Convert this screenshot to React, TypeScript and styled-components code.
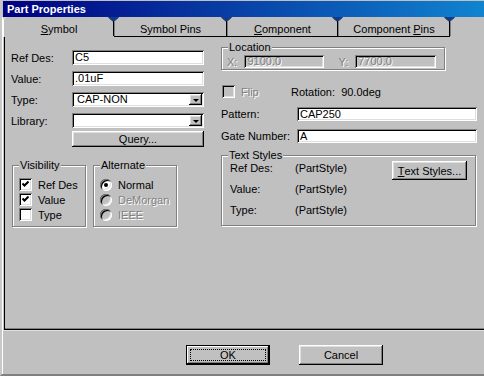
import React from "react";
import styled, { createGlobalStyle, css } from "styled-components";

const GlobalStyle = createGlobalStyle`
  html, body {
    margin: 0;
    padding: 0;
    background: #c0c0c0;
  }
  body {
    font-family: "Liberation Sans", Arial, sans-serif;
    font-size: 11px;
    color: #000;
  }
`;

const raised = css`
  box-shadow: inset -1px -1px #000, inset 1px 1px #fff,
    inset -2px -2px #808080, inset 2px 2px #dfdfdf;
`;

const sunken = css`
  box-shadow: inset 1px 1px #808080, inset -1px -1px #fff,
    inset 2px 2px #000, inset -2px -2px #dfdfdf;
`;

const tabs = [
  { label: "Symbol", u: 0, w: 111, active: true },
  { label: "Symbol Pins", u: -1, w: 113 },
  { label: "Component", u: 0, w: 111 },
  { label: "Component Pins", u: 10, w: 112 },
];

const Accel = ({ text, at }: { text: string; at: number }) =>
  at < 0 ? (
    <>{text}</>
  ) : (
    <>
      {text.slice(0, at)}
      <u>{text[at]}</u>
      {text.slice(at + 1)}
    </>
  );

const Joint = () => (
  <JointBox>
    <svg width="11" height="20" viewBox="0 0 11 20">
      <path d="M0 0 L5.5 5 L11 0 Z" fill="#0a3a9c" />
      <path d="M0.5 0.5 L5.5 4.5 L10.5 0.5" stroke="#404040" fill="none" />
      <path d="M5.5 4 V19" stroke="#000" />
      <path d="M6.5 5 V19" stroke="#808080" />
    </svg>
  </JointBox>
);

const Check = () => (
  <svg width="7" height="7" viewBox="0 0 7 7">
    <path d="M0.5 2.5 L2.5 4.5 L6.5 0.5" stroke="#000" strokeWidth="2" fill="none" />
  </svg>
);

const Combo = ({ value }: { value: string }) => (
  <ComboField>
    <FieldText>{value}</FieldText>
    <DropButton>
      <Arrow />
    </DropButton>
  </ComboField>
);

export default function App() {
  return (
    <>
      <GlobalStyle />
      <Window>
        <TitleBar>Part Properties</TitleBar>
        <Body>
          <TabStrip>
            {tabs.map((t, i) => (
              <React.Fragment key={t.label}>
                {i > 0 && <Joint />}
                <Tab $w={t.w} $active={t.active}>
                  <Accel text={t.label} at={t.u} />
                </Tab>
              </React.Fragment>
            ))}
            <Joint />
            <TabRest />
          </TabStrip>

          <Panel>
            <LeftCol>
              <FieldRow>
                <Label>Ref Des:</Label>
                <TextBox $w={132} $h={15}>C5</TextBox>
              </FieldRow>
              <FieldRow>
                <Label>Value:</Label>
                <TextBox $w={132} $h={15}>.01uF</TextBox>
              </FieldRow>
              <FieldRow>
                <Label>Type:</Label>
                <Combo value="CAP-NON" />
              </FieldRow>
              <FieldRow>
                <Label>Library:</Label>
                <Combo value="" />
              </FieldRow>
              <QueryButton>Query...</QueryButton>

              <GroupRow>
                <GroupBox $w={74} $pad="11px 0 4px 6px">
                  <Legend>Visibility</Legend>
                  <OptionRow>
                    <CheckBox><Check /></CheckBox>
                    <span>Ref Des</span>
                  </OptionRow>
                  <OptionRow>
                    <CheckBox><Check /></CheckBox>
                    <span>Value</span>
                  </OptionRow>
                  <OptionRow>
                    <CheckBox />
                    <span>Type</span>
                  </OptionRow>
                </GroupBox>
                <GroupBox $w={84} $pad="11px 0 4px 6px">
                  <Legend>Alternate</Legend>
                  <OptionRow>
                    <Radio><Dot /></Radio>
                    <span>Normal</span>
                  </OptionRow>
                  <OptionRow>
                    <Radio $disabled />
                    <Disabled>DeMorgan</Disabled>
                  </OptionRow>
                  <OptionRow>
                    <Radio $disabled />
                    <Disabled>IEEE</Disabled>
                  </OptionRow>
                </GroupBox>
              </GroupRow>
            </LeftCol>

            <RightCol>
              <GroupBox $w={224} $pad="7px 0 1px 5px">
                <Legend>Location</Legend>
                <LocRow>
                  <Disabled>X:</Disabled>
                  <TextBox $w={80} $h={13} $disabled>9100.0</TextBox>
                  <Disabled>Y:</Disabled>
                  <TextBox $w={81} $h={13} $disabled>7700.0</TextBox>
                </LocRow>
              </GroupBox>

              <FlipRow>
                <FlipCheck>
                  <CheckBox $disabled />
                  <Disabled>Flip</Disabled>
                </FlipCheck>
                <span>Rotation:&nbsp; 90.0deg</span>
              </FlipRow>

              <WideRow>
                <WideLabel>Pattern:</WideLabel>
                <TextBox $w={180} $h={14}>CAP250</TextBox>
              </WideRow>
              <WideRow>
                <WideLabel>Gate Number:</WideLabel>
                <TextBox $w={180} $h={14}>A</TextBox>
              </WideRow>

              <StylesBox $w={255} $pad="1px 0 5px 8px">
                <Legend>Text Styles</Legend>
                <StyleGrid>
                  <span>Ref Des:</span>
                  <span>(PartStyle)</span>
                  <StylesButton>
                    <Accel text="Text Styles..." at={0} />
                  </StylesButton>
                  <span>Value:</span>
                  <span>(PartStyle)</span>
                  <span />
                  <span>Type:</span>
                  <span>(PartStyle)</span>
                  <span />
                </StyleGrid>
              </StylesBox>
            </RightCol>
          </Panel>

          <Footer>
            <DefaultButton>
              <FocusRing>OK</FocusRing>
            </DefaultButton>
            <PushButton>Cancel</PushButton>
          </Footer>
        </Body>
      </Window>
    </>
  );
}

const Window = styled.div`
  width: 484px;
  height: 376px;
  overflow: hidden;
  background: #c0c0c0;
  box-sizing: border-box;
  border-left: 2px solid #c8c8c8;
  border-bottom: 2px solid #808080;
  display: flex;
  flex-direction: column;
`;

const TitleBar = styled.div`
  margin: 1px 0 0 1px;
  height: 16px;
  flex: none;
  box-sizing: border-box;
  padding: 1px 0 0 4px;
  background: linear-gradient(to right, #000080, #1084d0);
  color: #fff;
  font-weight: 700;
  font-size: 11px;
  line-height: 14px;
  white-space: nowrap;
`;

const Body = styled.div`
  flex: 1;
  display: flex;
  flex-direction: column;
  border-left: 1px solid #fff;
`;

const TabStrip = styled.div`
  height: 20px;
  flex: none;
  display: flex;
`;

const Tab = styled.div<{ $w: number; $active?: boolean }>`
  width: ${(p) => p.$w}px;
  flex: none;
  box-sizing: border-box;
  padding-top: 6px;
  text-align: center;
  white-space: nowrap;
  line-height: 13px;
  border-bottom: ${(p) => (p.$active ? "none" : "1px solid #000")};
  border-left: ${(p) => (p.$active ? "1px solid #fff" : "none")};
  border-top-left-radius: ${(p) => (p.$active ? "4px" : "0")};
`;

const JointBox = styled.div`
  width: 0;
  flex: none;
  position: relative;

  svg {
    position: absolute;
    left: -6px;
    top: 0;
    display: block;
  }
`;

const TabRest = styled.div`
  flex: 1;
`;

const Panel = styled.div`
  height: 293px;
  flex: none;
  box-sizing: border-box;
  margin-left: 1px;
  border-left: 1px solid #000;
  border-bottom: 1px solid #000;
  box-shadow: inset 0 -1px #808080;
  padding-left: 6px;
  display: flex;
  gap: 17px;
`;

const LeftCol = styled.div`
  width: 193px;
  flex: none;
  padding-top: 13px;
  display: flex;
  flex-direction: column;
`;

const RightCol = styled.div`
  width: 256px;
  flex: none;
  padding-top: 10px;
  display: flex;
  flex-direction: column;
  align-items: flex-start;
`;

const FieldRow = styled.div`
  display: flex;
  align-items: center;
  margin-bottom: 6px;
  height: 15px;
`;

const Label = styled.span`
  width: 61px;
  flex: none;
`;

const FieldText = styled.span`
  flex: 1;
  padding-left: 3px;
  white-space: nowrap;
  overflow: hidden;
`;

const TextBox = styled.div<{ $w: number; $h: number; $disabled?: boolean }>`
  width: ${(p) => p.$w}px;
  height: ${(p) => p.$h}px;
  flex: none;
  box-sizing: border-box;
  background: ${(p) => (p.$disabled ? "#c0c0c0" : "#fff")};
  color: ${(p) => (p.$disabled ? "#808080" : "#000")};
  text-shadow: ${(p) => (p.$disabled ? "1px 1px #fff" : "none")};
  ${sunken}
  padding-left: 3px;
  display: flex;
  align-items: center;
  line-height: 11px;
  white-space: nowrap;
`;

const ComboField = styled.div`
  width: 132px;
  height: 15px;
  box-sizing: border-box;
  background: #fff;
  ${sunken}
  padding: 2px;
  display: flex;
  align-items: center;
  line-height: 11px;
`;

const DropButton = styled.div`
  width: 13px;
  height: 100%;
  flex: none;
  box-sizing: border-box;
  background: #c0c0c0;
  ${raised}
  display: flex;
  align-items: center;
  justify-content: center;
`;

const Arrow = styled.span`
  width: 0;
  height: 0;
  border-left: 3px solid transparent;
  border-right: 3px solid transparent;
  border-top: 3px solid #000;
  margin-top: 1px;
`;

const buttonBase = css`
  box-sizing: border-box;
  background: #c0c0c0;
  font-family: inherit;
  font-size: 11px;
  color: #000;
  display: flex;
  align-items: center;
  justify-content: center;
  white-space: nowrap;
`;

const QueryButton = styled.div`
  ${buttonBase}
  ${raised}
  width: 132px;
  height: 16px;
  margin: -3px 0 0 61px;
`;

const GroupRow = styled.div`
  display: flex;
  gap: 7px;
  margin: 18px 0 0 1px;
`;

const GroupBox = styled.div<{ $w: number; $pad: string }>`
  position: relative;
  width: ${(p) => p.$w}px;
  box-sizing: border-box;
  border: 1px solid #808080;
  box-shadow: inset 1px 1px #fff, 1px 1px #fff;
  padding: ${(p) => p.$pad};
`;

const StylesBox = styled(GroupBox)`
  margin-top: 12px;
`;

const Legend = styled.span`
  position: absolute;
  top: -7px;
  left: 6px;
  padding: 0 1px;
  background: #c0c0c0;
  line-height: 13px;
`;

const OptionRow = styled.div`
  display: flex;
  align-items: center;
  gap: 6px;
  height: 15px;
`;

const CheckBox = styled.span<{ $disabled?: boolean }>`
  width: 13px;
  height: 13px;
  flex: none;
  box-sizing: border-box;
  background: ${(p) => (p.$disabled ? "#c0c0c0" : "#fff")};
  ${sunken}
  display: flex;
  align-items: center;
  justify-content: center;

  svg {
    display: block;
  }
`;

const Radio = styled.span<{ $disabled?: boolean }>`
  width: 12px;
  height: 12px;
  flex: none;
  box-sizing: border-box;
  border-radius: 50%;
  background: ${(p) => (p.$disabled ? "#c0c0c0" : "#fff")};
  box-shadow: inset 1px 1px #808080, inset -1px -1px #fff,
    inset 2px 2px #000, inset -2px -2px #dfdfdf;
  display: flex;
  align-items: center;
  justify-content: center;
`;

const Dot = styled.span`
  width: 4px;
  height: 4px;
  border-radius: 50%;
  background: #000;
`;

const Disabled = styled.span`
  color: #808080;
  text-shadow: 1px 1px #fff;
`;

const LocRow = styled.div`
  display: flex;
  align-items: center;
  gap: 7px;

  & > :nth-child(3) {
    margin-left: 7px;
  }
`;

const FlipRow = styled.div`
  display: flex;
  align-items: center;
  margin: 15px 0 0 1px;
  height: 13px;
`;

const FlipCheck = styled.div`
  width: 69px;
  display: flex;
  align-items: center;
  gap: 6px;
`;

const WideRow = styled.div`
  display: flex;
  align-items: center;
  margin-top: 9px;
  height: 14px;

  & + & {
    margin-top: 8px;
  }
`;

const WideLabel = styled.span`
  width: 76px;
  flex: none;
`;

const StyleGrid = styled.div`
  display: grid;
  grid-template-columns: 65px 97px 75px;
  grid-auto-rows: 21px;
  align-items: center;
`;

const PushButton = styled.div`
  ${buttonBase}
  ${raised}
  width: 84px;
  height: 20px;
`;

const StylesButton = styled(PushButton)`
  width: 75px;
  height: 19px;
  align-self: start;
  margin-top: 4px;
`;

const Footer = styled.div`
  flex: 1;
  display: flex;
  align-items: flex-start;
  gap: 29px;
  padding: 14px 0 0 183px;
  border-top: 1px solid #dfdfdf;
`;

const DefaultButton = styled.div`
  ${buttonBase}
  width: 84px;
  height: 20px;
  border: 1px solid #000;
  box-shadow: inset -1px -1px #000, inset 1px 1px #fff, inset -2px -2px #808080;
  padding: 3px;
`;

const FocusRing = styled.span`
  flex: 1;
  align-self: stretch;
  border: 1px dotted #000;
  display: flex;
  align-items: center;
  justify-content: center;
`;
